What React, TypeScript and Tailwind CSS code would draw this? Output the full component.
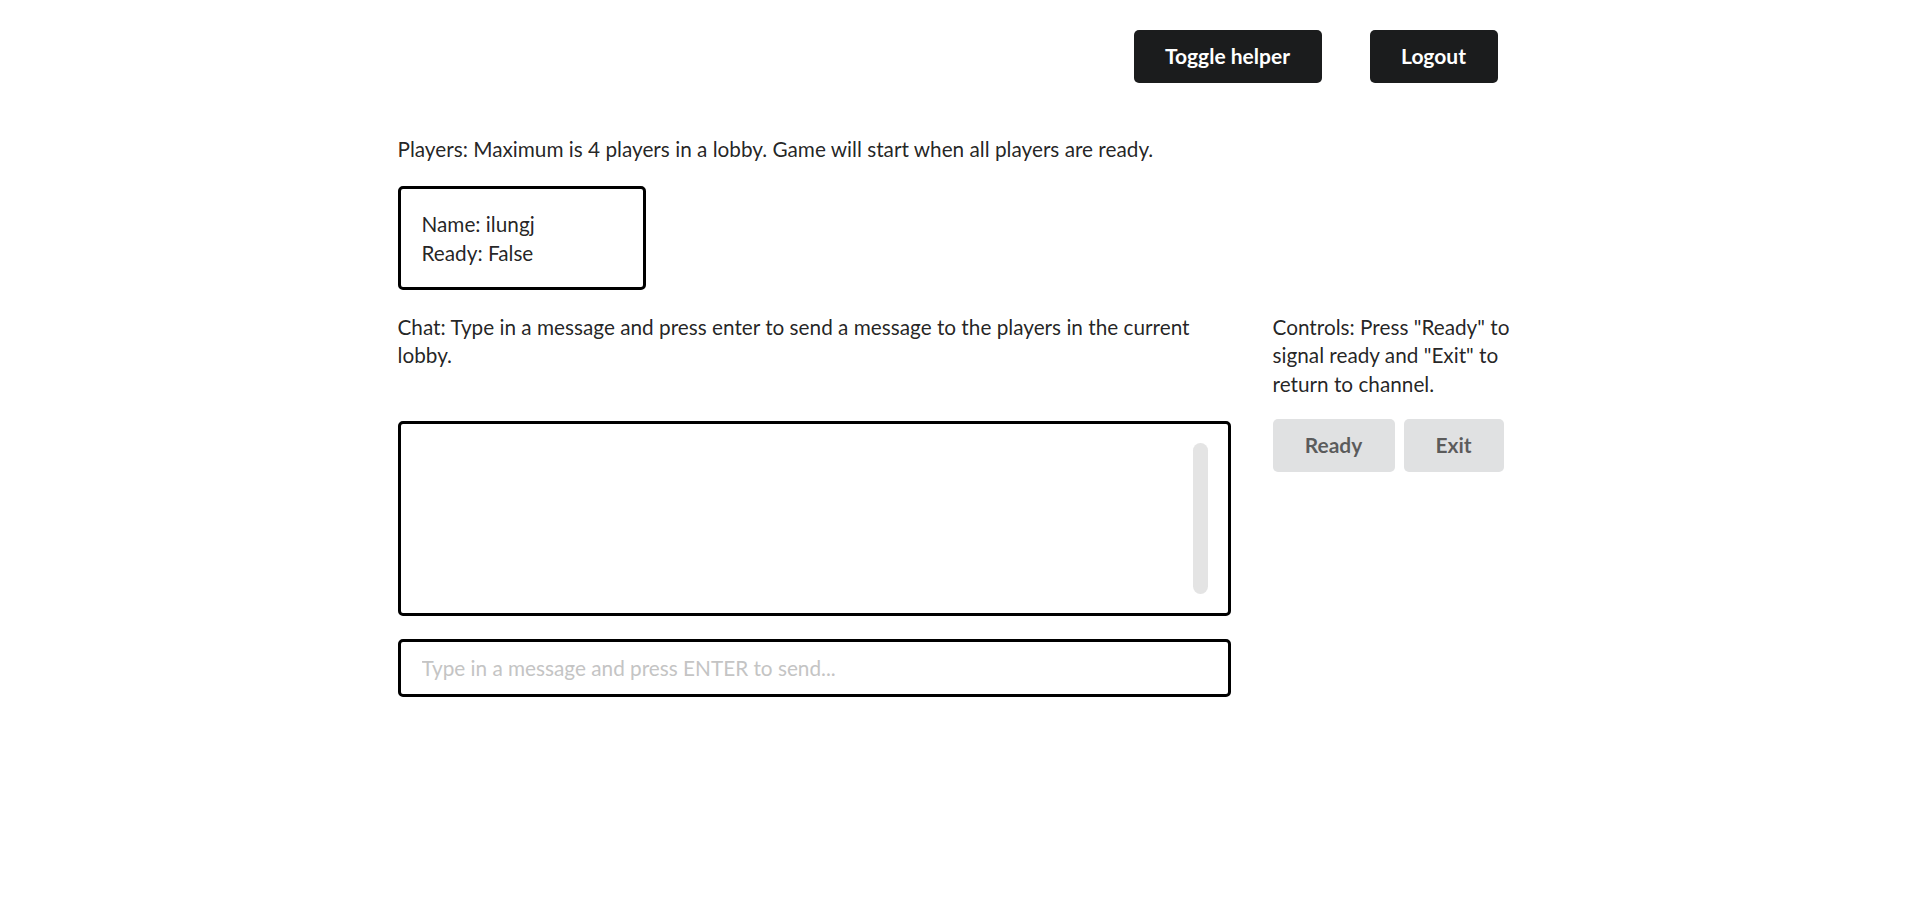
export default function App() {
  return (
    <div className="min-h-screen bg-white font-['Lato','Noto_Sans',sans-serif] text-[20.75px] leading-[28.5px] text-[rgba(0,0,0,0.87)]">
      <div className="mx-auto w-[1125px]">
        <div className="flex justify-end gap-[48px] pr-[25px] pt-[30px]">
          <button className="h-[53px] w-[188px] rounded-[5px] bg-[#1b1c1d] text-[21px] font-bold text-white">
            Toggle helper
          </button>
          <button className="h-[53px] w-[128px] rounded-[5px] bg-[#1b1c1d] text-[21px] font-bold text-white">
            Logout
          </button>
        </div>

        <p className="mt-[52px]">
          Players: Maximum is 4 players in a lobby. Game will start when all players are ready.
        </p>

        <div className="mt-[22px] w-[248px] rounded-[5px] border-[3px] border-black px-[21px] pb-[19px] pt-[21px] leading-[29px]">
          <div>Name: ilungj</div>
          <div>Ready: False</div>
        </div>

        <div className="mt-[23px] flex gap-[42px]">
          <div className="w-[833px]">
            <p className="h-[108px]">
              Chat: Type in a message and press enter to send a message to the players in the current lobby.
            </p>
            <div className="flex h-[195px] justify-end rounded-[5px] border-[3px] border-black p-[19px] pr-[20px]">
              <div className="w-[15px] rounded-full bg-[#e4e4e4]" />
            </div>
            <input
              className="mt-[23px] h-[58px] w-full rounded-[5px] border-[3px] border-black px-[21px] text-[20.75px] outline-none placeholder:text-[#c4c4c4]"
              placeholder="Type in a message and press ENTER to send..."
            />
          </div>

          <div className="w-[250px]">
            <p>Controls: Press "Ready" to signal ready and "Exit" to return to channel.</p>
            <div className="mt-[21px] flex gap-[9px]">
              <button className="h-[53px] w-[122px] rounded-[5px] bg-[#e0e1e2] text-[21px] font-bold text-[rgba(0,0,0,0.6)]">
                Ready
              </button>
              <button className="h-[53px] w-[100px] rounded-[5px] bg-[#e0e1e2] text-[21px] font-bold text-[rgba(0,0,0,0.6)]">
                Exit
              </button>
            </div>
          </div>
        </div>
      </div>
    </div>
  )
}
